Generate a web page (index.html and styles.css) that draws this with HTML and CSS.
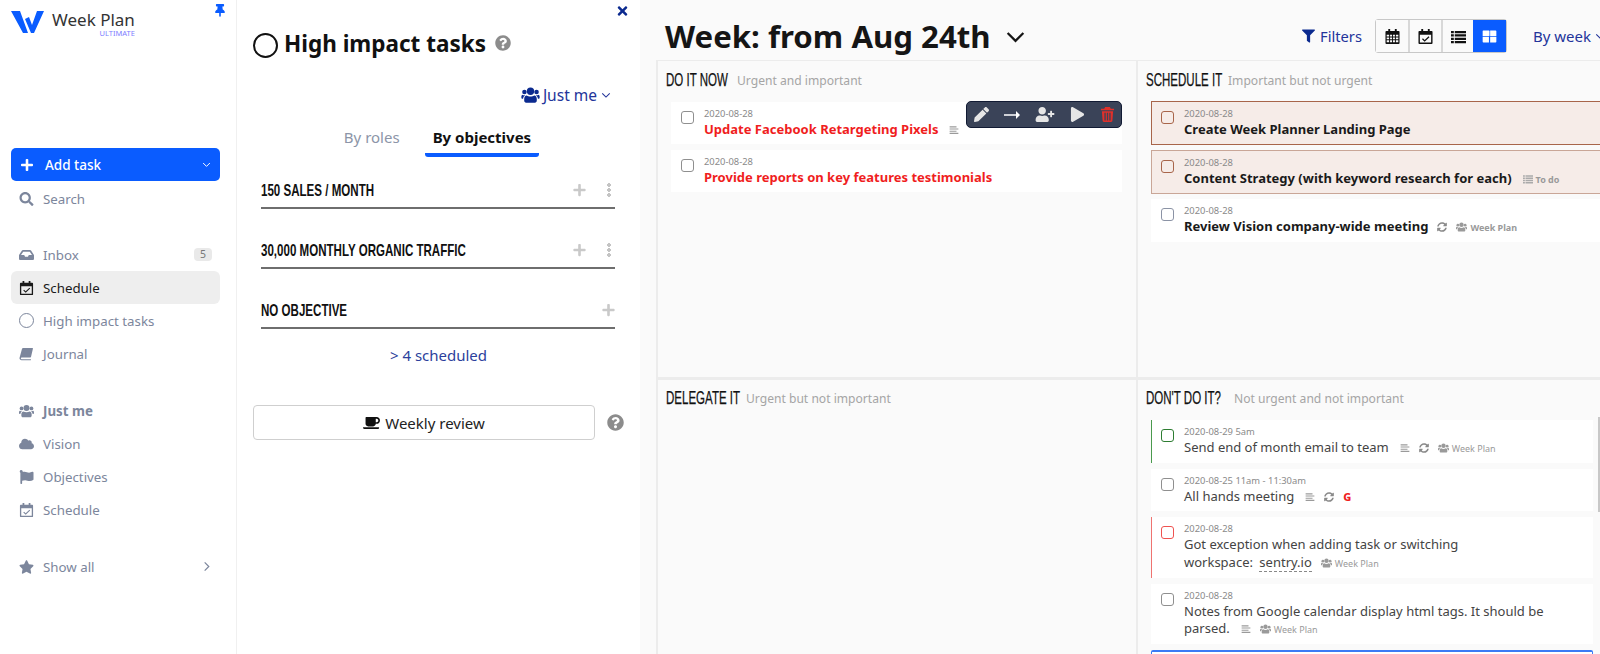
FILE: index.html
```html
<!DOCTYPE html>
<html lang="en">
<head>
<meta charset="utf-8">
<title>Week Plan</title>
<link rel="stylesheet" href="styles.css">
</head>
<body>
<svg class="defs" aria-hidden="true">
  <symbol id="i-plus" viewBox="0 0 448 512"><path d="M416 208H272V64c0-17.67-14.33-32-32-32h-32c-17.67 0-32 14.33-32 32v144H32c-17.67 0-32 14.33-32 32v32c0 17.67 14.33 32 32 32h144v144c0 17.67 14.33 32 32 32h32c17.67 0 32-14.33 32-32V304h144c17.67 0 32-14.33 32-32v-32c0-17.67-14.33-32-32-32z"/></symbol>
  <symbol id="i-search" viewBox="0 0 512 512"><path d="M505 442.7L405.3 343c-4.5-4.5-10.6-7-17-7H372c27.6-35.3 44-79.7 44-128C416 93.1 322.9 0 208 0S0 93.1 0 208s93.1 208 208 208c48.3 0 92.7-16.4 128-44v16.3c0 6.4 2.5 12.5 7 17l99.7 99.7c9.4 9.4 24.6 9.4 33.9 0l28.3-28.3c9.4-9.4 9.4-24.6.1-34zM208 336c-70.7 0-128-57.2-128-128 0-70.7 57.2-128 128-128 70.7 0 128 57.2 128 128 0 70.7-57.2 128-128 128z"/></symbol>
  <symbol id="i-users" viewBox="0 0 16 14"><circle cx="8" cy="3.700" r="3.200"/><circle cx="2.700" cy="4.300" r="2"/><circle cx="13.300" cy="4.300" r="2"/><path d="M4.800 7.400c.8.500 1.900.9 3.200.9s2.400-.4 3.200-.9c1.500.1 2.300 1.400 2.300 3.100v1.600c0 .9-.7 1.600-1.600 1.600H4.100c-.9 0-1.600-.7-1.600-1.600v-1.600c0-1.700.8-3 2.300-3.100zM.9 6.800c.5.300 1 .5 1.700.5.300 0 .6 0 .8-.1C2.200 8 1.600 9.100 1.500 10.300H.8c-.5 0-.8-.3-.8-.8V8.300c0-.6.300-1.200.9-1.500zM15.100 6.800c.6.300.9.900.9 1.500v1.200c0 .5-.3.800-.8.800h-.7c-.1-1.200-.7-2.300-1.900-3.100.2.100.5.100.8.100.7 0 1.200-.2 1.700-.5z"/></symbol>
  <symbol id="i-star" viewBox="0 0 576 512"><path d="M259.3 17.8L194 150.2 47.9 171.5c-26.2 3.8-36.7 36.1-17.7 54.6l105.7 103-25 145.5c-4.5 26.3 23.2 46 46.4 33.7L288 439.6l130.7 68.7c23.2 12.2 50.9-7.4 46.4-33.7l-25-145.5 105.7-103c19-18.5 8.5-50.8-17.7-54.6L382 150.2 316.7 17.8c-11.7-23.6-45.6-23.9-57.4 0z"/></symbol>
  <symbol id="i-help" viewBox="0 0 512 512"><path d="M504 256c0 136.997-111.043 248-248 248S8 392.997 8 256C8 119.083 119.043 8 256 8s248 111.083 248 248zM262.655 90c-54.497 0-89.255 22.957-116.549 63.758-3.536 5.286-2.353 12.415 2.715 16.258l34.699 26.31c5.205 3.947 12.621 3.008 16.665-2.122 17.864-22.658 30.113-35.797 57.303-35.797 20.429 0 45.698 13.148 45.698 32.958 0 14.976-12.363 22.667-32.534 33.976C247.128 238.528 216 254.941 216 296v4c0 6.627 5.373 12 12 12h56c6.627 0 12-5.373 12-12v-1.333c0-28.462 83.186-29.647 83.186-106.667 0-58.002-60.165-102-116.531-102zM256 338c-25.365 0-46 20.635-46 46 0 25.364 20.635 46 46 46s46-20.636 46-46c0-25.365-20.635-46-46-46z"/></symbol>
  <symbol id="i-times" viewBox="0 0 352 512"><path d="M242.72 256l100.07-100.07c12.28-12.28 12.28-32.19 0-44.48l-22.24-22.24c-12.28-12.28-32.19-12.28-44.48 0L176 189.28 75.93 89.21c-12.28-12.28-32.19-12.28-44.48 0L9.21 111.45c-12.28 12.28-12.28 32.19 0 44.48L109.28 256 9.21 356.07c-12.28 12.28-12.28 32.19 0 44.48l22.24 22.24c12.28 12.28 32.2 12.28 44.48 0L176 322.72l100.07 100.07c12.28 12.28 32.2 12.28 44.48 0l22.24-22.24c12.28-12.28 12.28-32.19 0-44.48L242.72 256z"/></symbol>
  <symbol id="i-filter" viewBox="0 0 512 512"><path d="M487.976 0H24.028C2.71 0-8.047 25.866 7.058 40.971L192 225.941V432c0 7.831 3.821 15.17 10.237 19.662l80 55.98C298.02 518.69 320 507.493 320 487.98V225.941l184.947-184.97C520.021 25.896 509.338 0 487.976 0z"/></symbol>
  <symbol id="i-play" viewBox="0 0 448 512"><path d="M424.4 214.7L72.4 6.6C43.8-10.3 0 6.1 0 47.9V464c0 37.5 40.7 60.1 72.4 41.3l352-208c31.4-18.5 31.5-64.1 0-82.6z"/></symbol>
  <symbol id="i-pencil" viewBox="0 0 512 512"><path d="M497.9 142.1l-46.1 46.1c-4.7 4.7-12.3 4.7-17 0l-111-111c-4.7-4.7-4.7-12.3 0-17l46.1-46.1c18.7-18.7 49.1-18.7 67.9 0l60.1 60.1c18.8 18.7 18.8 49.1 0 67.9zM284.2 99.8L21.6 362.4.4 483.9c-2.9 16.4 11.4 30.6 27.8 27.8l121.5-21.3 262.6-262.6c4.7-4.7 4.7-12.3 0-17l-111-111c-4.8-4.7-12.4-4.7-17.1 0z"/></symbol>
  <symbol id="i-cloud" viewBox="0 0 640 512"><path d="M537.6 226.6c4.1-10.7 6.4-22.4 6.4-34.6 0-53-43-96-96-96-19.7 0-38.1 6-53.3 16.2C367 64.2 315.3 32 256 32c-88.4 0-160 71.6-160 160 0 2.7.1 5.4.2 8.1C40.2 219.8 0 273.2 0 336c0 79.5 64.5 144 144 144h368c70.7 0 128-57.3 128-128 0-61.9-44-113.6-102.4-125.4z"/></symbol>
  <symbol id="i-inbox" viewBox="0 0 576 512"><path d="M567.938 243.908L462.25 85.374A48.003 48.003 0 0 0 422.311 64H153.689a48 48 0 0 0-39.938 21.374L8.062 243.908A47.994 47.994 0 0 0 0 270.533V400c0 26.51 21.49 48 48 48h480c26.51 0 48-21.49 48-48V270.533a47.994 47.994 0 0 0-8.062-26.625zM162.252 128h251.497l85.333 128H376l-32 64H232l-32-64H76.918l85.334-128z"/></symbol>
  <symbol id="i-pin" viewBox="0 0 384 512"><path d="M298.028 214.267L285.793 96H328c13.255 0 24-10.745 24-24V24c0-13.255-10.745-24-24-24H56C42.745 0 32 10.745 32 24v48c0 13.255 10.745 24 24 24h42.207L85.972 214.267C37.465 236.82 0 277.261 0 328c0 13.255 10.745 24 24 24h136v104.007c0 1.242.289 2.467.845 3.578l24 48c2.941 5.882 11.364 5.893 14.311 0l24-48a8.008 8.008 0 0 0 .845-3.578V352h136c13.255 0 24-10.745 24-24-.001-51.183-37.983-91.42-85.973-113.733z"/></symbol>
  <symbol id="i-userplus" viewBox="0 0 640 512"><path d="M624 208h-64v-64c0-8.8-7.2-16-16-16h-32c-8.8 0-16 7.2-16 16v64h-64c-8.8 0-16 7.2-16 16v32c0 8.8 7.2 16 16 16h64v64c0 8.8 7.2 16 16 16h32c8.8 0 16-7.2 16-16v-64h64c8.8 0 16-7.2 16-16v-32c0-8.8-7.2-16-16-16zm-400 48c70.7 0 128-57.3 128-128S294.7 0 224 0 96 57.3 96 128s57.3 128 128 128zm89.6 32h-16.7c-22.2 10.2-46.9 16-72.9 16s-50.6-5.8-72.9-16h-16.7C60.2 288 0 348.2 0 422.4V464c0 26.5 21.5 48 48 48h352c26.5 0 48-21.5 48-48v-41.6c0-74.2-60.2-134.4-134.4-134.4z"/></symbol>
  <symbol id="i-coffee" viewBox="0 0 640 512"><path d="M192 384h192c53 0 96-43 96-96h32c70.6 0 128-57.4 128-128S582.6 32 512 32H120c-13.3 0-24 10.7-24 24v232c0 53 43 96 96 96zM512 96c35.3 0 64 28.7 64 64s-28.7 64-64 64h-32V96h32zm47.7 384H48.3c-47.6 0-61-64-36-64h583.3c25 0 11.8 64-35.9 64z"/></symbol>
  <symbol id="i-flag" viewBox="0 0 512 512"><path d="M349.565 98.783C295.978 98.783 251.721 64 184.348 64c-24.955 0-47.309 4.384-68.045 12.013a55.947 55.947 0 0 0 3.586-23.562C118.117 24.015 94.806 1.206 66.338.048 34.345-1.254 8 24.296 8 56c0 19.026 9.497 35.825 24 45.945V488c0 13.255 10.745 24 24 24h16c13.255 0 24-10.745 24-24v-94.4c28.311-12.064 63.582-22.122 114.435-22.122 53.588 0 97.844 34.783 165.217 34.783 48.169 0 86.667-16.294 122.505-40.858C506.84 359.452 512 349.571 512 339.045v-243.1c0-23.393-24.269-38.87-45.485-29.016-34.338 15.948-76.454 31.854-116.95 31.854z"/></symbol>
  <symbol id="i-sync" viewBox="0 0 512 512"><path d="M370.72 133.28C339.458 104.008 298.888 87.962 255.848 88c-77.458.068-144.328 53.178-162.791 126.85-1.344 5.363-6.122 9.15-11.651 9.15H24.103c-7.498 0-13.194-6.807-11.807-14.176C33.933 94.924 134.813 8 256 8c66.448 0 126.791 26.136 171.315 68.685L463.03 40.97C478.149 25.851 504 36.559 504 57.941V192c0 13.255-10.745 24-24 24H345.941c-21.382 0-32.09-25.851-16.971-40.971l41.75-41.749zM32 296h134.059c21.382 0 32.09 25.851 16.971 40.971l-41.75 41.75c31.262 29.273 71.835 45.319 114.876 45.28 77.418-.07 144.315-53.144 162.787-126.849 1.344-5.363 6.122-9.15 11.651-9.15h57.304c7.498 0 13.194 6.807 11.807 14.176C478.067 417.076 377.187 504 256 504c-66.448 0-126.791-26.136-171.315-68.685L48.97 471.03C33.851 486.149 8 475.441 8 454.059V320c0-13.255 10.745-24 24-24z"/></symbol>
  <symbol id="i-notes" viewBox="0 0 16 16"><path d="M1 2h11v1.800H1zM1 5.500h14v1.800H1zM1 9h11v1.800H1zM1 12.500h14v1.800H1z"/></symbol>
  <symbol id="i-list" viewBox="0 0 16 16"><path d="M0 2h3v2.400H0zM4 2h12v2.400H4zM0 5.600h3V8H0zM4 5.600h12V8H4zM0 9.200h3v2.400H0zM4 9.200h12v2.400H4zM0 12.800h3v2.400H0zM4 12.800h12v2.400H4z"/></symbol>
  <symbol id="i-grid" viewBox="0 0 16 16"><path d="M1.500 1.500h5.800a.7.7 0 0 1 .7.700v4.800a.7.7 0 0 1-.7.700H.7V2.200a.7.7 0 0 1 .8-.7zM8.700 1.500h5.800a.8.8 0 0 1 .8.700v5.500H8.700zM.7 8.500h6.700v5.800H1.500a.8.8 0 0 1-.8-.8zM8.700 8.500h6.600v5a.8.8 0 0 1-.8.800H8.700z"/></symbol>
  <symbol id="i-calcheck" viewBox="0 0 16 16"><path fill-rule="evenodd" d="M3.500 0h2v2h5V0h2v2h2a1 1 0 0 1 1 1v12a1 1 0 0 1-1 1h-13a1 1 0 0 1-1-1V3a1 1 0 0 1 1-1h2zM2 6v8.500h12V6zM11.300 7.800l.9.900-5.100 4.800-2.800-2.700.9-.9 1.900 1.800z"/></symbol>
  <symbol id="i-calgrid" viewBox="0 0 16 16"><path fill-rule="evenodd" d="M3.500 0h2v2h5V0h2v2h2a1 1 0 0 1 1 1v12a1 1 0 0 1-1 1h-13a1 1 0 0 1-1-1V3a1 1 0 0 1 1-1h2zM1.800 6v2h2.600V6zM5.400 6v2h2.100V6zM8.500 6v2h2.100V6zM11.600 6v2h2.600V6zM1.800 9v2h2.600V9zM5.400 9v2h2.100V9zM8.500 9v2h2.100V9zM11.600 9v2h2.600V9zM1.800 12v2.200h2.600V12zM5.400 12v2.200h2.100V12zM8.500 12v2.200h2.100V12zM11.600 12v2.200h2.600V12z"/></symbol>
  <symbol id="i-book" viewBox="0 0 16 16"><path d="M4.200 1h10.600c.5 0 .7.400.6.800l-2.200 9.400c-.1.500-.4.800-.9.800H3c-1 0-1.400.5-1.400 1s.4 1 1.200 1h10.400l-.3 1H2.400C1 15 0 14 0 12.800c0-.5.100-1 .3-1.500L2.800 2.200C3 1.400 3.500 1 4.200 1z"/></symbol>
  <symbol id="i-trash" viewBox="0 0 16 16"><path fill-rule="evenodd" d="M5.500 0h5l1 1.800H15v1.700H1V1.800h3.500zM2 4.500h12l-.8 10.200c0 .7-.6 1.300-1.300 1.300H4.100c-.7 0-1.300-.6-1.300-1.300zM4.700 6v8.300h1.400V6zM7.300 6v8.300h1.400V6zM9.900 6v8.300h1.400V6z"/></symbol>
  <symbol id="i-chev" viewBox="0 0 12 12"><path d="M1.500 4l4.500 4.500L10.500 4" fill="none" stroke="currentColor" stroke-width="1.300"/></symbol>
</svg>

<div class="app">
  <nav class="sidebar">
    <div class="brand">
      <svg class="logo" viewBox="0 0 33 24"><path fill="#0a5cff" d="M0 1h9l8 22h-5zM14 9l4-2 3 8 5-14h7l-10 22h-3z"/></svg>
      <div class="brand-text"><span class="brand-name">Week Plan</span><span class="brand-tag">ULTIMATE</span></div>
      <svg class="ic pin"><use href="#i-pin"/></svg>
    </div>
    <div class="add-task">
      <svg class="ic add-plus"><use href="#i-plus"/></svg><span class="grow">Add task</span><svg class="ic add-chev"><use href="#i-chev"/></svg>
    </div>
    <div class="nav-item search"><svg class="ic"><use href="#i-search"/></svg><span>Search</span></div>
    <div class="nav-group first">
      <div class="nav-item"><svg class="ic"><use href="#i-inbox"/></svg><span class="grow">Inbox</span><span class="badge">5</span></div>
      <div class="nav-item active"><svg class="ic"><use href="#i-calcheck"/></svg><span>Schedule</span></div>
      <div class="nav-item"><span class="ring"></span><span>High impact tasks</span></div>
      <div class="nav-item"><svg class="ic"><use href="#i-book"/></svg><span>Journal</span></div>
    </div>
    <div class="nav-group">
      <div class="nav-item strong"><svg class="ic"><use href="#i-users"/></svg><span>Just me</span></div>
      <div class="nav-item"><svg class="ic"><use href="#i-cloud"/></svg><span>Vision</span></div>
      <div class="nav-item"><svg class="ic"><use href="#i-flag"/></svg><span>Objectives</span></div>
      <div class="nav-item"><svg class="ic"><use href="#i-calcheck"/></svg><span>Schedule</span></div>
    </div>
    <div class="nav-group">
      <div class="nav-item"><svg class="ic"><use href="#i-star"/></svg><span class="grow">Show all</span><svg class="ic more"><use href="#i-chev"/></svg></div>
    </div>
  </nav>

  <section class="panel">
    <div class="panel-close"><svg class="ic"><use href="#i-times"/></svg></div>
    <h2 class="panel-title"><span class="ring big"></span><span>High impact tasks</span><svg class="ic help"><use href="#i-help"/></svg></h2>
    <div class="who"><svg class="ic"><use href="#i-users"/></svg><span>Just me</span><svg class="ic chev"><use href="#i-chev"/></svg></div>
    <div class="tabs"><span class="tab">By roles</span><span class="tab on">By objectives</span></div>
    <div class="obj"><span class="grow"><span class="cond">150 SALES / MONTH</span></span><svg class="ic o-plus"><use href="#i-plus"/></svg><span class="dots"></span></div>
    <div class="obj"><span class="grow"><span class="cond">30,000 MONTHLY ORGANIC TRAFFIC</span></span><svg class="ic o-plus"><use href="#i-plus"/></svg><span class="dots"></span></div>
    <div class="obj"><span class="grow"><span class="cond">NO OBJECTIVE</span></span><svg class="ic o-plus"><use href="#i-plus"/></svg></div>
    <div class="scheduled">&gt; 4 scheduled</div>
    <div class="review">
      <div class="review-btn"><svg class="ic"><use href="#i-coffee"/></svg><span>Weekly review</span></div>
      <svg class="ic help"><use href="#i-help"/></svg>
    </div>
  </section>

  <main class="main">
    <header class="top">
      <h1 class="week">Week: from Aug 24th</h1>
      <svg class="ic week-chev"><use href="#i-chev"/></svg>
      <div class="filters"><svg class="ic"><use href="#i-filter"/></svg><span>Filters</span></div>
      <div class="views">
        <span class="view"><svg class="ic"><use href="#i-calgrid"/></svg></span>
        <span class="view"><svg class="ic"><use href="#i-calcheck"/></svg></span>
        <span class="view"><svg class="ic"><use href="#i-list"/></svg></span>
        <span class="view on"><svg class="ic"><use href="#i-grid"/></svg></span>
      </div>
      <div class="byweek"><span>By week</span><svg class="ic chev"><use href="#i-chev"/></svg></div>
    </header>

    <div class="matrix">
      <section class="quad upper">
        <div class="q-head"><span class="q-name now"><span class="cond">DO IT NOW</span></span><span class="q-sub">Urgent and important</span></div>
        <div class="tasks inset">
          <article class="task urgent">
            <span class="check"></span>
            <div class="t-body"><div class="t-date">2020-08-28</div><div class="t-title"><b>Update Facebook Retargeting Pixels</b><svg class="ic tm"><use href="#i-notes"/></svg></div></div>
            <div class="hover-bar">
              <svg class="ic"><use href="#i-pencil"/></svg>
              <svg class="arrow" viewBox="0 0 16 8"><path d="M0 3.200h12V0l4 4-4 4V4.800H0z" fill="#fff"/></svg>
              <svg class="ic up"><use href="#i-userplus"/></svg>
              <svg class="ic"><use href="#i-play"/></svg>
              <svg class="ic del"><use href="#i-trash"/></svg>
            </div>
          </article>
          <article class="task urgent">
            <span class="check"></span>
            <div class="t-body"><div class="t-date">2020-08-28</div><div class="t-title"><b>Provide reports on key features testimonials</b></div></div>
          </article>
        </div>
      </section>
      <section class="quad upper">
        <div class="q-head"><span class="q-name sched"><span class="cond">SCHEDULE IT</span></span><span class="q-sub">Important but not urgent</span></div>
        <div class="tasks wide">
          <article class="task flagged">
            <span class="check brown"></span>
            <div class="t-body"><div class="t-date">2020-08-28</div><div class="t-title"><b>Create Week Planner Landing Page</b></div></div>
          </article>
          <article class="task flagged soft">
            <span class="check brown"></span>
            <div class="t-body"><div class="t-date">2020-08-28</div><div class="t-title"><b>Content Strategy (with keyword research for each)</b><svg class="ic tl"><use href="#i-list"/></svg><span class="tag-b">To do</span></div></div>
          </article>
          <article class="task">
            <span class="check slate"></span>
            <div class="t-body"><div class="t-date">2020-08-28</div><div class="t-title"><b>Review Vision company-wide meeting</b><svg class="ic tm sync"><use href="#i-sync"/></svg><svg class="ic tu"><use href="#i-users"/></svg><span class="tag-b">Week Plan</span></div></div>
          </article>
        </div>
      </section>
      <section class="quad">
        <div class="q-head"><span class="q-name deleg"><span class="cond">DELEGATE IT</span></span><span class="q-sub">Urgent but not important</span></div>
      </section>
      <section class="quad">
        <div class="q-head"><span class="q-name dont"><span class="cond">DON'T DO IT?</span></span><span class="q-sub">Not urgent and not important</span></div>
        <div class="tasks">
          <article class="task edge-green">
            <span class="check green"></span>
            <div class="t-body"><div class="t-date">2020-08-29 5am</div><div class="t-title">Send end of month email to team<svg class="ic tm"><use href="#i-notes"/></svg><svg class="ic tm sync"><use href="#i-sync"/></svg><svg class="ic tu"><use href="#i-users"/></svg><span class="tag">Week Plan</span></div></div>
          </article>
          <article class="task">
            <span class="check"></span>
            <div class="t-body"><div class="t-date">2020-08-25 11am - 11:30am</div><div class="t-title">All hands meeting<svg class="ic tm"><use href="#i-notes"/></svg><svg class="ic tm sync"><use href="#i-sync"/></svg><span class="goog">G</span></div></div>
          </article>
          <article class="task edge-red">
            <span class="check red"></span>
            <div class="t-body"><div class="t-date">2020-08-28</div><div class="t-title">Got exception when adding task or switching <span class="nowrap">workspace: <span class="link">sentry.io</span></span><svg class="ic tu"><use href="#i-users"/></svg><span class="tag">Week Plan</span></div></div>
          </article>
          <article class="task">
            <span class="check"></span>
            <div class="t-body"><div class="t-date">2020-08-28</div><div class="t-title">Notes from Google calendar display html tags. It should be parsed.<svg class="ic tm"><use href="#i-notes"/></svg><svg class="ic tu"><use href="#i-users"/></svg><span class="tag">Week Plan</span></div></div>
          </article>
          <div class="task-new"></div>
        </div>
        <span class="scrollbar"></span>
      </section>
    </div>
  </main>
</div>
</body>
</html>
```
FILE: styles.css
```css
* { box-sizing: border-box; }
html, body { margin: 0; height: 100%; overflow: hidden; }
body { font-family: "Noto Sans", "Open Sans", sans-serif; font-size: 13.5px; color: #1a1a1a; background: #fff; }
.defs { display: none; }
.ic { display: inline-block; width: 14px; height: 14px; fill: currentColor; flex: none; }
.grow { flex: 1; }
.nowrap { white-space: nowrap; }
.cond { display: inline-block; font-family: "Liberation Sans", sans-serif; font-weight: 700; color: #111; white-space: nowrap; transform: scaleX(.68); transform-origin: left center; }
.app { display: flex; width: 1600px; height: 654px; }

.sidebar { width: 237px; flex: none; padding: 0 16px 0 11px; border-right: 1px solid #f0f0f0; color: #7c869c; }
.brand { position: relative; display: flex; align-items: flex-start; height: 148px; padding-top: 10px; }
.logo { width: 33px; height: 24px; flex: none; }
.brand-text { display: flex; flex-direction: column; align-items: flex-end; margin-left: 8px; padding-top: 1px; }
.brand-name { font-size: 17px; line-height: 18px; color: #333; }
.brand-tag { font-size: 7.5px; line-height: 9px; color: #7d7dff; }
.pin { position: absolute; left: 204px; top: 4px; width: 10px; height: 13px; color: #0a5cff; }
.add-task { display: flex; align-items: center; height: 33px; padding: 0 9px 0 10px; border-radius: 5px; background: #0a5cff; color: #fff; font-size: 13.5px; font-weight: 500; }
.add-plus { width: 12px; height: 14px; margin-right: 12px; }
.add-chev { width: 9px; height: 9px; }
.nav-item { display: flex; align-items: center; height: 33px; padding: 0 8px; border-radius: 6px; font-size: 13.3px; }
.nav-item.search { margin-top: 1px; margin-bottom: -1px; }
.nav-item > .ic:first-child { width: 15px; height: 14px; margin-right: 9px; }
.nav-item > .ring { margin-right: 9px; }
.nav-group { margin-top: 24px; }
.active { background: #eeeeee; color: #1a1a1a; }
.strong { font-weight: 700; }
.badge { padding: 0 6px; border-radius: 4px; background: #e9e9e9; color: #777; font-size: 10.5px; line-height: 13px; }
.more { width: 11px; height: 11px; transform: rotate(-90deg); }
.ring { display: inline-block; width: 15px; height: 15px; border: 1.5px solid #7c869c; border-radius: 50%; flex: none; }

.panel { position: relative; width: 403px; flex: none; padding: 0 25px 0 16px; background: #fff; }
.panel-close { position: absolute; left: 380px; top: 4px; color: #0b2a8f; }
.panel-close .ic { width: 11px; height: 14px; }
.panel-title { display: flex; align-items: center; margin: 27px 0 0; height: 32px; font-size: 22.5px; font-weight: 700; color: #111; }
.ring.big { width: 25px; height: 25px; border: 2px solid #111; margin-right: 6px; margin-top: 4px; }
.panel-title .help { width: 16px; height: 16px; margin-left: 9px; color: #8c8c8c; }
.who { display: flex; align-items: center; justify-content: flex-end; margin-top: 24px; padding-right: 4px; height: 24px; font-size: 15.5px; color: #23349a; }
.who .ic:first-child { width: 19px; height: 16px; margin-right: 3px; color: #0b2a8f; }
.chev { width: 10px; height: 10px; margin-left: 4px; }
.tabs { display: flex; justify-content: center; gap: 17px; margin-top: 15px; padding-left: 7px; }
.tab { height: 35px; padding: 5px 8px 0; font-size: 15px; color: #8c95a8; border-bottom: 4px solid transparent; }
.tab.on { font-weight: 700; color: #111; border-bottom-color: #0a5cff; border-radius: 0 0 3px 3px; }
.obj { display: flex; align-items: center; margin: 22px 0 0 8px; height: 30px; padding-bottom: 7px; border-bottom: 2px solid #6e6e6e; font-size: 17px; }
.obj + .obj { margin-top: 30px; }
.o-plus { width: 13px; height: 14px; color: #c9c9c9; margin-left: 6px; }
.dots { display: inline-block; width: 4px; height: 14px; margin: 0 4px 0 21px; background: radial-gradient(circle at 2px 2px, #c4c4c4 2px, transparent 2px) 0 0 / 4px 5px repeat-y; }
.scheduled { margin-top: 15px; padding-left: 9px; text-align: center; font-size: 15px; line-height: 22px; color: #2c3f9c; }
.review { display: flex; align-items: center; margin-top: 39px; margin-right: -20px; }
.review-btn { display: flex; align-items: center; justify-content: center; gap: 5px; width: 342px; height: 35px; flex: none; border: 1px solid #cfcfcf; border-radius: 4px; font-size: 15px; color: #222; }
.review-btn .ic { width: 17px; height: 14px; color: #111; }
.review .help { width: 17px; height: 17px; margin-left: 12px; color: #8c8c8c; }

.main { flex: 1; min-width: 0; overflow: hidden; background: #fafafa; }
.top { display: flex; align-items: center; width: 965px; height: 60px; padding: 12px 0 0 25px; }
.week { margin: 0; font-size: 31.2px; font-weight: 700; line-height: 40px; color: #151515; white-space: nowrap; }
.week-chev { width: 21px; height: 21px; margin-left: 14px; color: #151515; }
.filters { display: flex; align-items: center; gap: 5px; margin-left: auto; font-size: 14.7px; color: #23349a; }
.filters .ic { width: 13px; height: 14px; color: #0b2a8f; }
.views { display: flex; margin-left: 13px; border: 1px solid #c8c8c8; border-radius: 3px; }
.view { display: flex; align-items: center; justify-content: center; width: 32.5px; height: 32px; background: #fafafa; color: #111; border-left: 2px solid #d8d8d8; }
.view:first-child { border-left: 0; }
.view .ic { width: 15px; height: 15px; }
.view.on { background: #0a5cff; color: #fff; border-left: 0; }
.byweek { display: flex; align-items: center; margin-left: 26px; font-size: 15px; color: #23349a; white-space: nowrap; }

.matrix { display: grid; grid-template-columns: 480px 481px; grid-template-rows: 319px 1fr; width: 961px; height: 594px; margin-left: 16px; border-top: 1px solid #ececec; border-left: 2px solid #ececec; }
.quad { position: relative; padding: 6px 0 0; border-right: 2px solid #ececec; border-bottom: 3px solid #ececec; }
.quad.upper { padding-top: 7px; }
.q-head { display: flex; align-items: center; height: 22px; padding-left: 8px; }
.q-name { display: block; flex: none; font-size: 18px; line-height: 22px; }
.q-name .cond { font-weight: 400; transform: scaleX(.64); -webkit-text-stroke: .25px #111; }
.q-name.now { width: 71px; }
.q-name.sched { width: 82px; }
.q-name.deleg { width: 80px; }
.q-name.dont { width: 88px; }
.q-sub { font-size: 12.1px; color: #a5a5a5; padding-top: 2px; }
.tasks { display: flex; flex-direction: column; gap: 6px; width: 442px; margin: 12px 0 0 13px; }
.tasks.inset { margin-top: 12px; width: 451px; }
.tasks.wide { margin-top: 11px; gap: 5px; width: 470px; }
.task { position: relative; display: flex; gap: 10px; min-height: 42px; padding: 5px 10px 5.5px; background: #fff; }
.check { width: 13px; height: 13px; margin-top: 4px; border: 1.5px solid #8f8f8f; border-radius: 3px; flex: none; }
.check.brown { border-color: #a8654a; }
.check.slate { border-color: #8b93a5; }
.check.green { border-color: #2e7d32; }
.check.red { border-color: #ef5350; }
.t-date { font-size: 9.4px; line-height: 14px; color: #8a8a8a; }
.t-title { font-size: 13px; line-height: 17.5px; color: #444; }
.t-title b { font-weight: 700; color: #1a1a1a; }
.urgent .t-title b { color: #f01e1e; }
.flagged { min-height: 43px; border: 1px solid #a8654a; background: #f6ece8; padding: 5px 9px; }
.flagged.soft { border-color: #c9a697; }
.edge-green { border-left: 1px solid #4a9a4e; padding-left: 9px; }
.edge-red { border-left: 1px solid #ef7370; padding-left: 9px; }
.tm { width: 10px; height: 10px; margin-left: 11px; color: #9a9a9a; vertical-align: -1px; }
.tm.sync { color: #8a8a8a; margin-left: 9px; }
.tl { width: 10px; height: 10px; margin-left: 11px; margin-right: 3px; color: #aaa; vertical-align: -1px; }
.tu { width: 11px; height: 10px; margin-left: 9px; margin-right: 3px; color: #9a9a9a; vertical-align: -1px; }
.tag, .tag-b { font-size: 9px; color: #9a9a9a; }
.tag-b { font-weight: 700; }
.goog { margin-left: 9px; font-size: 11px; font-weight: 800; color: #ef2020; }
.link { border-bottom: 1px dashed #888; margin-left: 3px; }
.task-new { height: 30px; border: 1px solid #3b7bf5; border-top-width: 2px; background: #fff; border-radius: 2px 2px 0 0; }
.scrollbar { position: absolute; left: 460px; top: 37px; width: 2px; height: 95px; background: #c8c8c8; }
.hover-bar { position: absolute; right: 0; top: -1px; display: flex; align-items: center; gap: 15px; height: 27px; padding: 0 6px 0 7px; border: 1px solid #111a33; border-radius: 5px; background: #3a4358; color: #e6e6e6; }
.hover-bar .ic { width: 15px; height: 15px; }
.hover-bar .up { width: 20px; }
.arrow { width: 16px; height: 8px; flex: none; }
.hover-bar .del { color: #e0302a; }
```
